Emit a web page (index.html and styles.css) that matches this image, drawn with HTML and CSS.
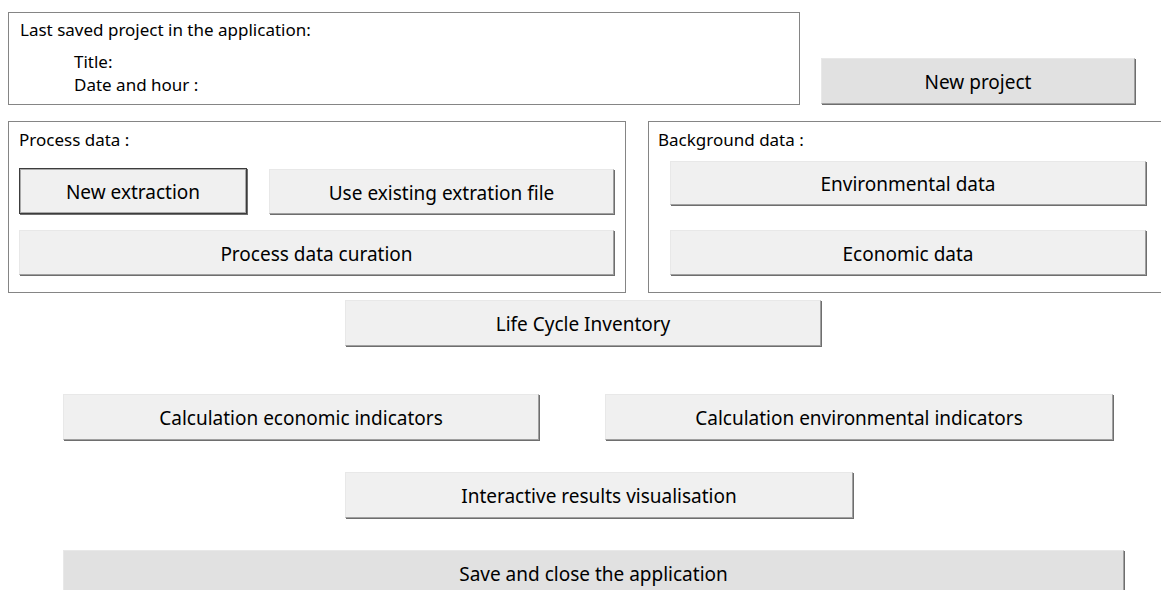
FILE: index.html
```html
<!DOCTYPE html>
<html lang="en">
<head>
  <meta charset="UTF-8">
  <title>Main menu</title>
  <link rel="stylesheet" href="styles.css">
</head>
<body>
  <div class="window">
    <div class="top-row">
      <div class="frame last-saved">
        <p class="frame-title">Last saved project in the application:</p>
        <p class="info">Title:</p>
        <p class="info">Date and hour :</p>
      </div>
      <button class="btn btn-dark btn-new-project">New project</button>
    </div>

    <div class="data-row">
      <div class="frame process">
        <p class="frame-title">Process data :</p>
        <div class="process-buttons">
          <button class="btn btn-focus btn-extraction">New extraction</button>
          <button class="btn btn-existing">Use existing extration file</button>
        </div>
        <button class="btn btn-curation">Process data curation</button>
      </div>
      <div class="frame background">
        <p class="frame-title">Background data :</p>
        <button class="btn btn-bg btn-env">Environmental data</button>
        <button class="btn btn-bg btn-eco">Economic data</button>
      </div>
    </div>

    <button class="btn btn-lci">Life Cycle Inventory</button>

    <div class="calc-row">
      <button class="btn btn-calc-eco">Calculation economic indicators</button>
      <button class="btn btn-calc-env">Calculation environmental indicators</button>
    </div>

    <button class="btn btn-results">Interactive results visualisation</button>

    <button class="btn btn-dark btn-save">Save and close the application</button>
  </div>
</body>
</html>
```

FILE: styles.css
```css
html, body {
  margin: 0;
  padding: 0;
  background: #ffffff;
  overflow: hidden;
}

body {
  font-family: "Noto Sans", "DejaVu Sans", sans-serif;
  color: #000;
  width: 1161px;
  height: 590px;
}

p {
  margin: 0;
}

.window {
  display: flex;
  flex-direction: column;
  align-items: flex-start;
}

.frame {
  box-sizing: border-box;
  border: 1px solid #858585;
  background: #fff;
}

.frame-title {
  font-size: 17px;
  line-height: 20px;
}

/* buttons look like the old windows ones */
.btn {
  box-sizing: border-box;
  height: 46px;
  padding: 2px 0 0 0;
  font-family: inherit;
  font-size: 19px;
  color: #000;
  background: #f0f0f0;
  border-top: 1px solid #e8e8e8;
  border-left: 1px solid #e8e8e8;
  border-right: 1px solid #a0a0a0;
  border-bottom: 1px solid #a0a0a0;
  box-shadow: 1px 1px 0 #6e6e6e;
  cursor: pointer;
}

.btn-dark {
  background: #e1e1e1;
}

.btn-focus {
  border: 1px solid #3c3c3c;
  box-shadow: 1px 1px 0 #6e6e6e, inset 0 0 0 1px #a9a9a9;
}

.top-row {
  display: flex;
  align-items: flex-end;
  margin: 12px 0 0 8px;
}

.last-saved {
  width: 792px;
  height: 93px;
  padding: 7px 0 0 11px;
}

.info {
  margin-left: 54px;
  font-size: 17px;
  line-height: 23px;
}

.last-saved .frame-title {
  margin-bottom: 10px;
}

.btn-new-project {
  width: 314px;
  margin: 0 0 1px 21px;
}

.data-row {
  display: flex;
  margin: 16px 0 0 8px;
  gap: 22px;
}

.process {
  width: 618px;
  height: 172px;
  padding: 8px 0 0 10px;
}

.process-buttons {
  display: flex;
  gap: 22px;
  margin-top: 18px;
}

.btn-extraction {
  width: 228px;
}

.btn-existing {
  width: 345px;
  margin-top: 1px;
  height: 45px;
}

.btn-curation {
  width: 595px;
  margin-top: 16px;
  height: 45px;
}

.background {
  width: 540px;
  height: 172px;
  padding: 8px 0 0 9px;
  border-right: none;
  display: flex;
  flex-direction: column;
  align-items: flex-start;
}

.btn-bg {
  width: 476px;
  height: 44px;
  margin-left: 12px;
}

.btn-env {
  margin-top: 11px;
}

.btn-eco {
  margin-top: 25px;
  height: 45px;
}

.btn-lci {
  width: 476px;
  margin: 7px 0 0 345px;
}

.calc-row {
  display: flex;
  margin: 48px 0 0 63px;
  gap: 66px;
}

.btn-calc-eco {
  width: 476px;
}

.btn-calc-env {
  width: 508px;
}

.btn-results {
  width: 508px;
  margin: 32px 0 0 345px;
}

.btn-save {
  width: 1061px;
  margin: 32px 0 0 63px;
}
```
